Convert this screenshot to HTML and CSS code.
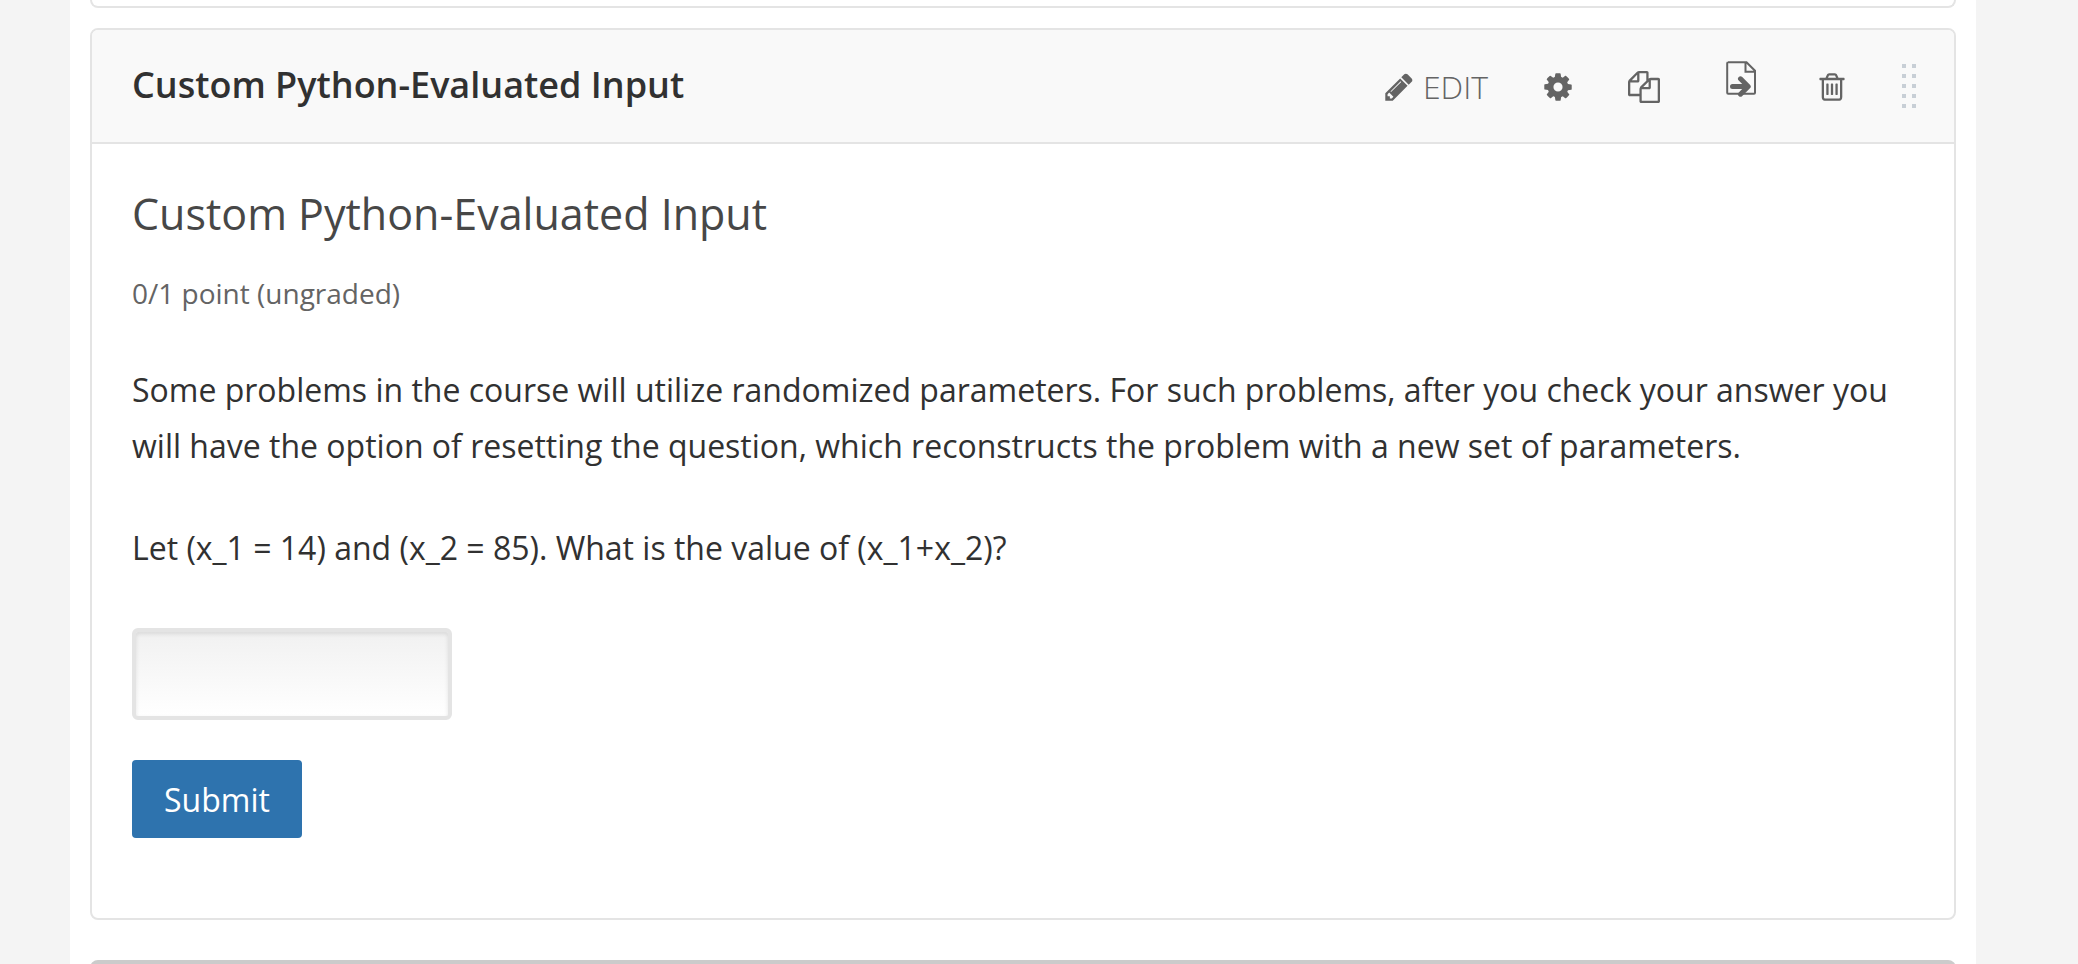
FILE: index.html
```
<!DOCTYPE html>
<html lang="en">
<head>
<meta charset="utf-8">
<title>Custom Python-Evaluated Input</title>
<link rel="stylesheet" href="styles.css">
</head>
<body>
<main class="unit">
  <div class="component component-previous"></div>

  <section class="component">
    <header class="component-header">
      <h2 class="component-name">Custom Python-Evaluated Input</h2>
      <div class="actions">
        <button class="action action-edit" type="button">
          <svg class="icon" viewBox="0 0 1792 1792" aria-hidden="true"><path d="M491 1536l91-91-235-235-91 91v107h128v128h107zM1014 608q0-22-22-22-10 0-17 7l-542 542q-7 7-7 17 0 22 22 22 10 0 17-7l542-542q7-7 7-17zm-54-192l416 416-832 832H128v-416zm683 96q0 53-37 90l-166 166-416-416 166-165q36-38 90-38 53 0 91 38l235 234q37 39 37 91z"/></svg>
          <span>EDIT</span>
        </button>
        <button class="action" type="button" aria-label="Settings">
          <svg class="icon" viewBox="0 0 1792 1792" aria-hidden="true"><path d="M1152 896q0-106-75-181t-181-75-181 75-75 181 75 181 181 75 181-75 75-181zm512-109v222q0 12-8 23t-20 13l-185 28q-19 54-39 91 35 50 107 138 10 12 10 25t-9 23q-27 37-99 108t-94 71q-12 0-26-9l-138-108q-44 23-91 38-16 136-29 186-7 28-36 28h-222q-14 0-24.500-8.500t-11.500-21.500l-28-184q-49-16-90-37l-141 107q-10 9-25 9-14 0-25-11-126-114-165-168-7-10-7-23 0-12 8-23 15-21 51-66.500t54-70.500q-27-50-41-99l-183-27q-13-2-21-12.500t-8-23.500v-222q0-12 8-23t19-13l186-28q14-46 39-92-40-57-107-138-10-12-10-24 0-10 9-23 26-36 98.500-107.500t94.500-71.500q13 0 26 10l138 107q44-23 91-38 16-136 29-186 7-28 36-28h222q14 0 24.500 8.500t11.500 21.500l28 184q49 16 90 37l142-107q9-9 24-9 13 0 25 10 129 119 165 170 7 8 7 22 0 12-8 23-15 21-51 66.500t-54 70.500q26 50 41 98l183 28q13 2 21 12.500t8 23.500z"/></svg>
        </button>
        <button class="action" type="button" aria-label="Duplicate">
          <svg class="icon" viewBox="0 0 1792 1792" aria-hidden="true"><path d="M1696 384q40 0 68 28t28 68v1216q0 40-28 68t-68 28h-960q-40 0-68-28t-28-68v-288h-544q-40 0-68-28t-28-68v-672q0-40 20-88t48-76l408-408q28-28 76-48t88-20h416q40 0 68 28t28 68v328q68-40 128-40h416zm-544 213l-299 299h299v-299zm-640-384l-299 299h299v-299zm196 647l316-316v-416h-384v416q0 40-28 68t-68 28h-416v640h512v-256q0-40 20-88t48-76zm956 804v-1152h-384v416q0 40-28 68t-68 28h-416v640h896z"/></svg>
        </button>
        <button class="action action-move" type="button" aria-label="Move">
          <svg class="icon-move" viewBox="0 0 48 36" aria-hidden="true">
            <path class="stroke" d="M14 1.200h18.500l8.500 8.500v22.100q0 1-1 1H14.200q-1 0-1-1V2.200q0-1 1-1zM31.500 1.200v9.500H41"/>
            <path class="stroke-arrow" d="M18.500 25.500H34M26.500 17.800l7.700 7.700-7.700 7.700"/>
          </svg>
        </button>
        <button class="action" type="button" aria-label="Delete">
          <svg class="icon" viewBox="0 0 1792 1792" aria-hidden="true"><path d="M704 736v576q0 14-9 23t-23 9h-64q-14 0-23-9t-9-23v-576q0-14 9-23t23-9h64q14 0 23 9t9 23zm256 0v576q0 14-9 23t-23 9h-64q-14 0-23-9t-9-23v-576q0-14 9-23t23-9h64q14 0 23 9t9 23zm256 0v576q0 14-9 23t-23 9h-64q-14 0-23-9t-9-23v-576q0-14 9-23t23-9h64q14 0 23 9t9 23zm128 724v-948h-896v948q0 22 7 40.500t14.500 27 10.500 8.500h832q3 0 10.500-8.500t14.500-27 7-40.500zm-672-1076h448l-48-117q-7-9-17-11h-317q-10 2-17 11zm928 32v64q0 14-9 23t-23 9h-96v948q0 83-47 143.500t-113 60.500h-832q-66 0-113-58.500t-47-141.500v-952h-96q-14 0-23-9t-9-23v-64q0-14 9-23t23-9h309l70-167q15-37 54-63t79-26h320q40 0 79 26t54 63l70 167h309q14 0 23 9t9 23z"/></svg>
        </button>
        <button class="action action-drag" type="button" aria-label="Drag to reorder">
          <svg class="icon-drag" viewBox="0 0 14 44" aria-hidden="true"><path d="M0 0h4v4H0zM10 0h4v4h-4zM0 10h4v4H0zM10 10h4v4h-4zM0 20h4v4H0zM10 20h4v4h-4zM0 30h4v4H0zM10 30h4v4h-4zM0 40h4v4H0zM10 40h4v4h-4z"/></svg>
        </button>
      </div>
    </header>

    <form class="problem">
      <h3 class="problem-title">Custom Python-Evaluated Input</h3>
      <p class="problem-progress">0/1 point (ungraded)</p>
      <p class="problem-text">Some problems in the course will utilize randomized parameters. For such problems, after you check your answer you will have the option of resetting the question, which reconstructs the problem with a new set of parameters.</p>
      <p class="problem-text"><label for="answer">Let (x_1 = 14) and (x_2 = 85). What is the value of (x_1+x_2)?</label></p>
      <input class="answer" id="answer" type="text">
      <button class="submit" type="button">Submit</button>
    </form>
  </section>

  <div class="component component-next"></div>
</main>
</body>
</html>
```
FILE: styles.css
```
* {
  box-sizing: border-box;
}

body {
  margin: 0;
  padding: 0 102px 0 70px;
  background: #f4f4f4;
  color: #313131;
  font-family: "Open Sans", "Noto Sans", sans-serif;
}

.unit {
  height: 100vh;
  padding: 0 20px;
  overflow: hidden;
  background: #fff;
}

.component {
  border: 2px solid #e4e4e4;
  border-radius: 8px;
}

.component-previous {
  height: 8px;
  margin-bottom: 20px;
  border-top: 0;
  border-radius: 0 0 8px 8px;
}

.component-next {
  height: 40px;
  margin-top: 40px;
  border: 0;
  border-radius: 8px 8px 0 0;
  background: #cbcbcb;
}

.component-header {
  display: flex;
  align-items: center;
  justify-content: space-between;
  min-height: 114px;
  padding: 0 38px 0 40px;
  border-bottom: 2px solid #e4e4e4;
  border-radius: 6px 6px 0 0;
  background: #f9f9f9;
}

.component-name {
  margin: 0;
  padding-bottom: 2px;
  font-size: 36px;
  font-weight: 600;
  line-height: 50px;
}

.actions {
  display: flex;
  align-items: center;
  gap: 54px;
}

.action {
  display: flex;
  align-items: center;
  padding: 2px 0 0;
  border: 0;
  background: none;
  color: #646464;
  font-family: inherit;
  font-size: 32px;
  font-weight: 300;
  line-height: 44px;
  cursor: pointer;
}

.action-edit {
  gap: 8px;
}

.action-move {
  margin-bottom: 16px;
}

.action-drag {
  padding: 0;
}

.icon {
  width: 32px;
  height: 32px;
  fill: currentColor;
}

.icon-move {
  width: 48px;
  height: 36px;
  fill: none;
  stroke: currentColor;
}

.stroke {
  stroke-width: 2;
}

.stroke-arrow {
  stroke-width: 5;
  stroke-linecap: round;
  stroke-linejoin: round;
}

.icon-drag {
  width: 14px;
  height: 44px;
  fill: #c8cfd6;
}

.problem {
  display: flex;
  flex-direction: column;
  align-items: flex-start;
  padding: 40px 40px 80px;
}

.problem-title {
  margin: 0 0 30px;
  color: #474747;
  font-size: 43px;
  font-weight: 400;
  line-height: 60px;
}

.problem-progress {
  margin: 0 0 50px;
  color: #646464;
  font-size: 28px;
  line-height: 38px;
}

.problem-text {
  margin: 0 0 46px;
  font-size: 32px;
  line-height: 56px;
}

.answer {
  width: 320px;
  height: 92px;
  margin: 6px 0 40px;
  padding: 0 20px;
  border: 4px solid #e4e4e4;
  border-radius: 6px;
  background: linear-gradient(#f1f1f1, #fff);
  box-shadow: inset 0 2px 4px rgba(0, 0, 0, 0.1);
  color: inherit;
  font-family: inherit;
  font-size: 32px;
}

.submit {
  height: 78px;
  padding: 2px 32px 0;
  border: 0;
  border-radius: 4px;
  background: #2e73ae;
  color: #fff;
  font-family: inherit;
  font-size: 32px;
  line-height: 44px;
  cursor: pointer;
}
```
